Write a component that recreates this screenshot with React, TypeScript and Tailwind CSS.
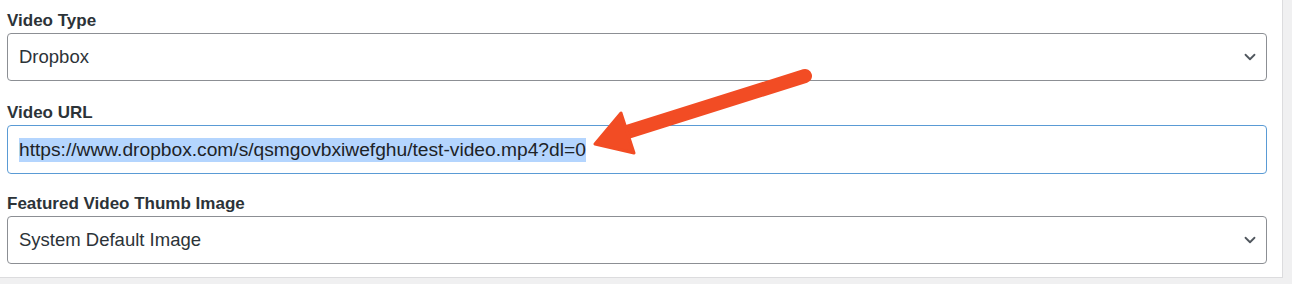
import { ChevronDown } from "lucide-react";

const font = { fontFamily: '"Liberation Sans", Arial, sans-serif' };

function SelectBox({ value }: { value: string }) {
    return (
        <div className="flex h-[48px] items-center justify-between rounded-[4px] border border-[#8c8f94] bg-white pl-[11px] pr-[7px]">
            <span className="text-[18.5px] text-[#2c3338]">{value}</span>
            <ChevronDown className="h-[18px] w-[18px] text-[#50575e]" strokeWidth={2.4} />
        </div>
    );
}

export default function App() {
    return (
        <div className="h-[284px] w-[1292px] bg-[#f0f0f1]" style={font}>
            <div className="relative h-[278px] w-[1283px] border-r border-b border-[#dcdcde] bg-white pl-[7px] pr-[15px] pt-[11px]">
                <div className="flex flex-col">
                    <label className="mb-[2px] h-[20px] text-[17px] font-semibold leading-[20px] text-[#2c3338]">Video Type</label>
                    <SelectBox value="Dropbox" />

                    <label className="mb-[2px] mt-[22px] h-[20px] text-[17px] font-semibold leading-[20px] text-[#2c3338]">Video URL</label>
                    <div className="flex h-[49px] items-center rounded-[4px] border border-[#5a9bd5] bg-white pl-[11px]">
                        <span className="bg-[#b4d5fe] text-[19.2px] leading-[24px] text-[#1d2327]">
                            https://www.dropbox.com/s/qsmgovbxiwefghu/test-video.mp4?dl=0
                        </span>
                    </div>

                    <label className="mb-[2px] mt-[20px] h-[20px] text-[17px] font-semibold leading-[20px] text-[#2c3338]">Featured Video Thumb Image</label>
                    <SelectBox value="System Default Image" />
                </div>

                <svg className="pointer-events-none absolute left-0 top-0" width="1292" height="284">
                    <line x1="805" y1="76" x2="624" y2="133" stroke="#f24c24" strokeWidth="14" strokeLinecap="round" />
                    <polygon points="595,144 621,113 634,153" fill="#f24c24" stroke="#f24c24" strokeWidth="3" strokeLinejoin="round" />
                </svg>
            </div>
        </div>
    );
}
